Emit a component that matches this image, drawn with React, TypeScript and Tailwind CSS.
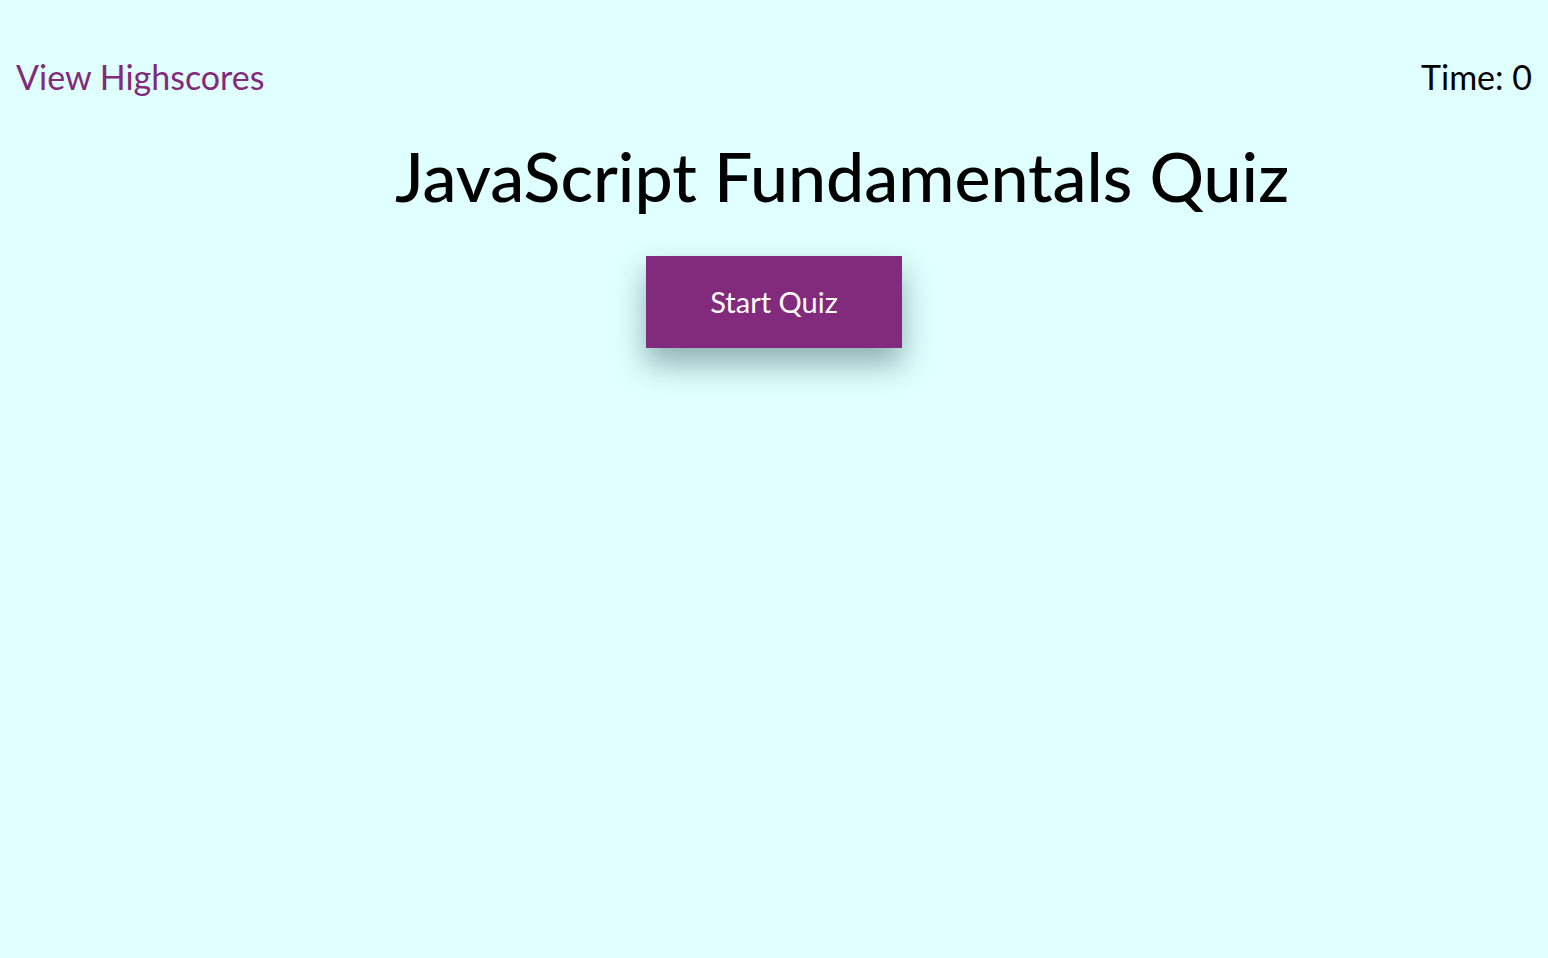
export default function App() {
  return (
    <div className="min-h-screen bg-[#e0ffff] font-['Lato','Open_Sans',sans-serif] text-black">
      <header className="flex items-center justify-between px-4 pt-[56px] h-[98px]">
        <a href="#" className="text-[34px] leading-[40px] text-[#822a7c]">
          View Highscores
        </a>
        <span className="text-[34px] leading-[40px]">Time: 0</span>
      </header>

      <main className="flex flex-col items-center">
        <h1 className="ml-[136px] mt-[38px] text-[68px] leading-[80px] font-medium">
          JavaScript Fundamentals Quiz
        </h1>
        <button className="mt-[40px] w-[256px] h-[92px] bg-[#822a7c] text-white text-[29px] shadow-[0_16px_30px_rgba(40,80,80,0.45)]">
          Start Quiz
        </button>
      </main>
    </div>
  );
}
